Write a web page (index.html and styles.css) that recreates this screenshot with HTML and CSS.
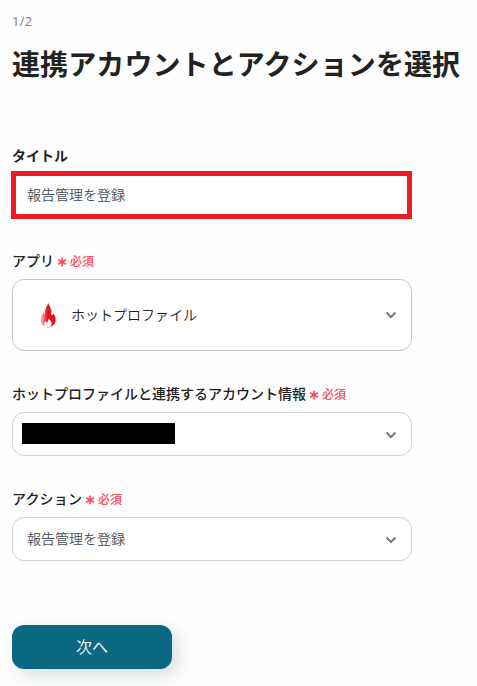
FILE: index.html
```html
<!DOCTYPE html>
<html lang="ja">
<head>
    <meta charset="UTF-8">
    <meta name="viewport" content="width=device-width, initial-scale=1.0">
    <title>連携アカウントとアクションを選択</title>
    <link rel="stylesheet" href="styles.css">
</head>
<body>
    <div class="main">
        <div class="step">1/2</div>
        <h1>連携アカウントとアクションを選択</h1>
        <div class="field">
            <div class="label title">タイトル</div>
            <div class="box focus"><span>報告管理を登録</span></div>
        </div>
        <div class="field">
            <div class="label">アプリ<svg class="star" viewBox="0 0 10 10"><path d="M5 .5v9M1.1 2.75l7.8 4.5M1.1 7.25l7.8-4.5"/></svg><span class="required">必須</span></div>
            <div class="box app">
                <svg class="fire" viewBox="0 0 16 25">
                    <defs>
                        <linearGradient id="flame">
                            <stop offset="0" stop-color="#f8c4c6"/>
                            <stop offset=".45" stop-color="#e5141b"/>
                        </linearGradient>
                    </defs>
                    <path fill="url(#flame)" d="M8.200 0C8 2.500 5.200 4.500 5 7.500c-.1 1.500.2 2.600-.2 4-.5-.4-.7-1-.8-1.900C2.200 11.500.6 14 .6 17c0 3.600 2.400 6.400 7.400 7.500 5-1 7.700-4 7.700-7.500 0-2.700-1-5-2.400-6.900-.1 1.100-.5 1.900-1.300 2.200-.9-.3-1-1.200-.8-2.300C11.900 6 9.700 4 8.200 0z"/>
                    <path fill="#fff" d="M8.200 15.500c2 1.600 3.600 3.300 3.400 5.600-.2 2-1.600 3.300-3.600 3.400-2.200-.1-3.900-1.300-3.900-3.300 0-1.300.6-2.300 1.500-3.200.2.900.6 1.300 1.300 1.300 1.200-.4 1.500-2 1.300-3.800z"/>
                </svg>
                <span>ホットプロファイル</span>
                <svg class="arrow" viewBox="0 0 12 8"><path d="M1.500 1.500L6 6l4.500-4.500"/></svg>
            </div>
        </div>
        <div class="field">
            <div class="label">ホットプロファイルと連携するアカウント情報<svg class="star" viewBox="0 0 10 10"><path d="M5 .5v9M1.1 2.75l7.8 4.5M1.1 7.25l7.8-4.5"/></svg><span class="required">必須</span></div>
            <div class="box">
                <div class="mask"></div>
                <svg class="arrow" viewBox="0 0 12 8"><path d="M1.500 1.500L6 6l4.500-4.500"/></svg>
            </div>
        </div>
        <div class="field">
            <div class="label action">アクション<svg class="star" viewBox="0 0 10 10"><path d="M5 .5v9M1.1 2.75l7.8 4.5M1.1 7.25l7.8-4.5"/></svg><span class="required">必須</span></div>
            <div class="box">
                <span>報告管理を登録</span>
                <svg class="arrow" viewBox="0 0 12 8"><path d="M1.500 1.500L6 6l4.500-4.500"/></svg>
            </div>
        </div>
        <button class="next">次へ</button>
    </div>
</body>
</html>
```
FILE: styles.css
```css
* {
    box-sizing: border-box;
}

body {
    margin: 0;
    background: #fefefe;
    overflow: hidden;
    font-family: "Noto Sans CJK JP", "Noto Sans", sans-serif;
    color: #222;
}

.main {
    padding: 11px 12px 17px;
}

.step {
    height: 20px;
    line-height: 21px;
    font-family: "Open Sans", "Noto Sans CJK JP", sans-serif;
    font-size: 13px;
    letter-spacing: 0.3px;
    color: #84788a;
}

h1 {
    margin: 13px 0 62px;
    height: 40px;
    line-height: 39px;
    font-size: 28px;
    font-weight: 700;
    letter-spacing: 0.1px;
    white-space: nowrap;
}

.field {
    width: 400px;
    margin-bottom: 33px;
}

.label {
    display: flex;
    align-items: center;
    height: 20px;
    margin-bottom: 8px;
    padding-bottom: 2px;
    font-size: 14px;
    font-weight: 500;
    white-space: nowrap;
}

.title {
    font-weight: 700;
}

.action {
    letter-spacing: 0.15px;
}

.star {
    width: 10px;
    height: 10px;
    margin: 4px 3px 0;
    fill: none;
    stroke: #ff4757;
    stroke-width: 1.6;
}

.required {
    font-size: 12px;
    letter-spacing: 0;
    color: #ff4757;
}

.box {
    display: flex;
    align-items: center;
    height: 44px;
    padding: 0 14px;
    border: 1px solid #ced0da;
    border-radius: 12px;
    background: #fff;
    font-size: 14px;
    font-weight: 350;
    color: #495057;
}

.box span {
    padding-bottom: 2px;
}

.focus {
    width: 401px;
    height: 48px;
    margin: -3px 0 -1px -1px;
    padding: 0 11px;
    border: 5px solid #ed1c24;
    border-radius: 0;
}

.app {
    height: 72px;
    padding-left: 27px;
    border-color: #c8c8c8;
    color: #222;
}

.fire {
    width: 16px;
    height: 25px;
    margin-right: 15px;
}

.arrow {
    width: 12px;
    height: 8px;
    margin-top: 1px;
    margin-left: auto;
    fill: none;
    stroke: #777;
    stroke-width: 2;
}

.app .arrow {
    margin-top: 0;
}

.mask {
    width: 153px;
    height: 21px;
    margin: 0 0 1px -5px;
    background: #000;
}

.next {
    display: block;
    width: 160px;
    height: 44px;
    margin-top: 64px;
    padding: 0 0 2px;
    border: none;
    border-radius: 12px;
    background: #0b6983;
    box-shadow: 6px 6px 16px rgba(40, 70, 85, 0.18);
    font-family: inherit;
    font-size: 16px;
    font-weight: 350;
    color: #fff;
}
```
